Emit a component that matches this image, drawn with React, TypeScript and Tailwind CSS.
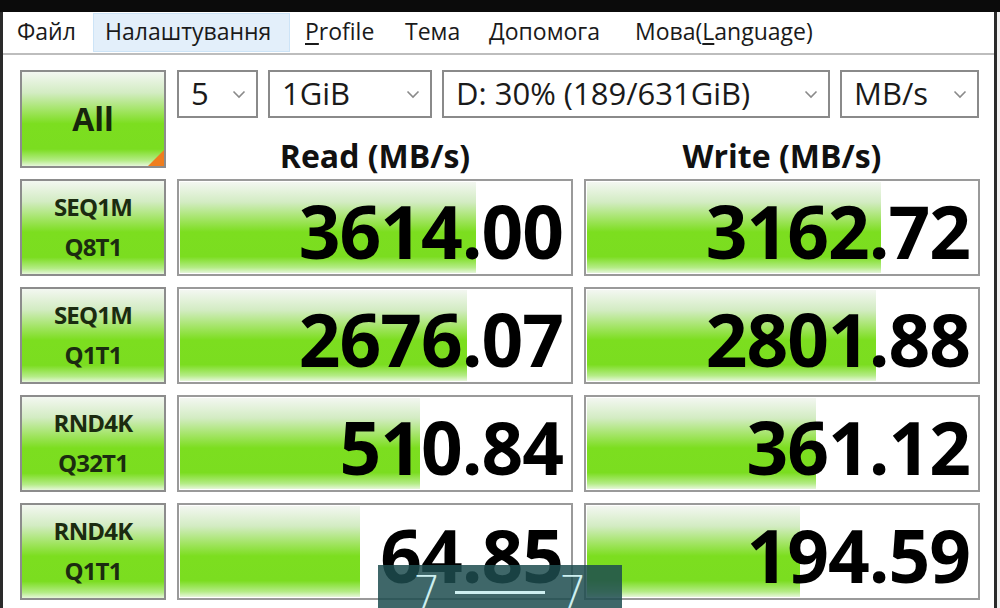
import React from 'react';

// пункти меню: ширина комірки і відступ тексту підібрані під скриншот
const MENU = [
  { pre: 'Файл', w: 'w-[90px]', pl: 'pl-[14px]' },
  { pre: 'Налаштування', w: 'w-[197px]', pl: 'pl-[11px]', active: true },
  { pre: '', u: 'P', post: 'rofile', w: 'w-[115px]', pl: 'pl-[15px]' },
  { pre: 'Тема', w: 'w-[84px]', pl: 'pl-0' },
  { pre: 'Допомога', w: 'w-[146px]', pl: 'pl-0' },
  { pre: 'Мова(', u: 'L', post: 'anguage)', w: 'w-[220px]', pl: 'pl-0' },
];

const ROWS = [
  { l1: 'SEQ1M', l2: 'Q8T1', read: '3614.00', rp: 76, write: '3162.72', wp: 75.3 },
  { l1: 'SEQ1M', l2: 'Q1T1', read: '2676.07', rp: 73.5, write: '2801.88', wp: 74 },
  { l1: 'RND4K', l2: 'Q32T1', read: '510.84', rp: 61.6, write: '361.12', wp: 58.8 },
  { l1: 'RND4K', l2: 'Q1T1', read: '64.85', rp: 46.2, write: '194.59', wp: 54.5 },
];

const green =
  'bg-[linear-gradient(to_bottom,#f3f7f1_0%,#d3ecc3_22%,#9fe45e_42%,#7cde1f_55%,#7bdd20_82%,#b4ec86_94%,#e6f7da_100%)]';

const Chevron = () => (
  <svg width="14" height="9" viewBox="0 0 14 9" className="shrink-0">
    <path d="M1.5 1.5 L7 7 L12.5 1.5" fill="none" stroke="#8a8a8a" strokeWidth="1.6" />
  </svg>
);

const Combo = ({ text, w }: { text: string; w: string }) => (
  <div
    className={`${w} flex h-[48px] items-center justify-between border-2 border-[#8a8a8a] bg-white pl-[12px] pr-[10px] text-[31px] leading-none text-[#1a1a1a]`}
  >
    <span className="pb-[2px]">{text}</span>
    <Chevron />
  </div>
);

const Bar = ({ value, pct }: { value: string; pct: number }) => (
  <div className="relative h-[97px] border-2 border-[#9a9a9a] bg-white p-[1px]">
    <div className={`h-full ${green}`} style={{ width: `${pct}%` }} />
    <div className="absolute inset-0 flex items-center justify-end pr-[8px] pt-[5px] text-[73px] font-bold leading-none tracking-[-1px] text-black">
      {value}
    </div>
  </div>
);

export default function App() {
  return (
    <div
      className="relative h-[608px] w-[1000px] overflow-hidden bg-white"
      style={{ fontFamily: '"Open Sans", "Noto Sans", sans-serif' }}
    >
      {/* рамка вікна зверху */}
      <div className="h-[12px] bg-[#0b0b0b]" />

      <div className="flex h-[596px]">
        <div className="w-[3px] bg-[#2a2a2a]" />

        <div className="flex w-[991px] flex-col">
          {/* меню */}
          <div className="flex h-[41px] items-center text-[23px] leading-none text-[#1a1a1a]">
            {MENU.map((m) => (
              <div
                key={m.pre + (m.post ?? '')}
                className={`flex h-[39px] shrink-0 items-center ${m.w} ${m.pl} ${
                  m.active ? 'border border-[#cde4f7] bg-[#e3effa]' : ''
                }`}
              >
                <span className="pb-[2px]">
                  {m.pre}
                  {m.u && <span className="underline underline-offset-[3px]">{m.u}</span>}
                  {m.post}
                </span>
              </div>
            ))}
          </div>
          <div className="h-[2px] bg-[#bdbdbd]" />

          {/* основна частина */}
          <div className="grid grid-cols-[146px_396px_396px] gap-x-[11px] gap-y-[11px] pl-[17px] pt-[15px]">
            <div
              className={`relative flex h-[98px] items-center justify-center border-2 border-[#8c8c8c] text-[32px] font-bold text-[#17250c] ${green}`}
            >
              All
              <div className="absolute bottom-0 right-0 h-0 w-0 border-b-[16px] border-l-[16px] border-b-[#ef7d1e] border-l-transparent" />
            </div>

            <div className="col-span-2 flex h-[98px] flex-col">
              <div className="flex gap-x-[10px]">
                <Combo text="5" w="w-[81px]" />
                <Combo text="1GiB" w="w-[164px]" />
                <Combo text="D: 30% (189/631GiB)" w="w-[388px]" />
                <Combo text="MB/s" w="w-[139px]" />
              </div>
              <div className="flex flex-1 items-center gap-x-[11px] pt-[22px] text-[32px] font-bold leading-none text-[#111]">
                <div className="w-[396px] text-center">Read (MB/s)</div>
                <div className="w-[396px] text-center">Write (MB/s)</div>
              </div>
            </div>

            {ROWS.map((r) => (
              <React.Fragment key={r.l1 + r.l2}>
                <div
                  className={`flex h-[97px] flex-col items-center justify-center gap-y-[16px] border-2 border-[#8c8c8c] pb-[2px] text-[24px] font-bold leading-none tracking-[-0.8px] text-[#1b2b10] ${green}`}
                >
                  <span>{r.l1}</span>
                  <span>{r.l2}</span>
                </div>
                <Bar value={r.read} pct={r.rp} />
                <Bar value={r.write} pct={r.wp} />
              </React.Fragment>
            ))}
          </div>
        </div>

        <div className="w-[3px] bg-[#2a2a2a]" />
        <div className="w-[3px] bg-[#f0f0f0]" />
      </div>

      {/* напівпрозора плашка знизу */}
      <div className="absolute bottom-0 left-[378px] flex h-[43px] w-[244px] items-start justify-center gap-x-[14px] bg-[#1d4c4f]/85 pt-[6px]">
        <span
          className="text-[44px] font-light leading-none text-[#cdeff0]"
          style={{ fontFamily: '"DejaVu Sans", sans-serif' }}
        >
          7
        </span>
        <div className="mt-[20px] h-[3px] w-[90px] bg-[#cdeff0]" />
        <span
          className="text-[44px] font-light leading-none text-[#cdeff0]"
          style={{ fontFamily: '"DejaVu Sans", sans-serif' }}
        >
          7
        </span>
      </div>
    </div>
  );
}
